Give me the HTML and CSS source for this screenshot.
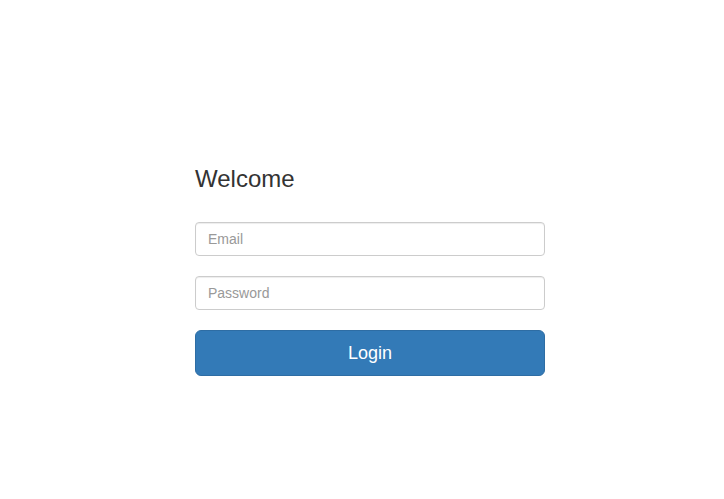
FILE: index.html
```html
<!DOCTYPE html>
<html lang="en">
<head>
  <meta charset="UTF-8" />
  <meta name="viewport" content="width=device-width, initial-scale=1.0"/>
  <title>Login</title>
  <link rel="stylesheet" href="styles.css">
</head>
<body>

<div class="login-box">
  <h3 class="title">Welcome</h3>
  <form class="login-form">
    <input type="email" class="form-control" placeholder="Email" />
    <input type="password" class="form-control" placeholder="Password" />
    <button type="submit" class="btn-login">Login</button>
  </form>
</div>

</body>
</html>
```

FILE: styles.css
```css
body {
  margin: 0;
  font-family: "Liberation Sans", Arial, sans-serif;
  background-color: #fff;
  color: #333;
}
.login-box {
  width: 350px;
  margin-left: 195px;
  padding-top: 166px;
}
.title {
  margin: 0 0 30px;
  font-size: 24px;
  font-weight: normal;
  line-height: 26px;
  color: #333;
}
.login-form {
  display: flex;
  flex-direction: column;
  gap: 20px;
}
.form-control {
  box-sizing: border-box;
  width: 100%;
  height: 34px;
  padding: 6px 12px;
  font-family: inherit;
  font-size: 14px;
  color: #555;
  border: 1px solid #ccc;
  border-radius: 4px;
  box-shadow: inset 0 1px 1px rgba(0, 0, 0, 0.075);
  outline: none;
}
.form-control::placeholder {
  color: #999;
}
.btn-login {
  box-sizing: border-box;
  width: 100%;
  height: 46px;
  padding: 10px 16px;
  font-family: inherit;
  font-size: 18px;
  color: #fff;
  background-color: #337ab7;
  border: 1px solid #2e6da4;
  border-radius: 6px;
  cursor: pointer;
}
```
